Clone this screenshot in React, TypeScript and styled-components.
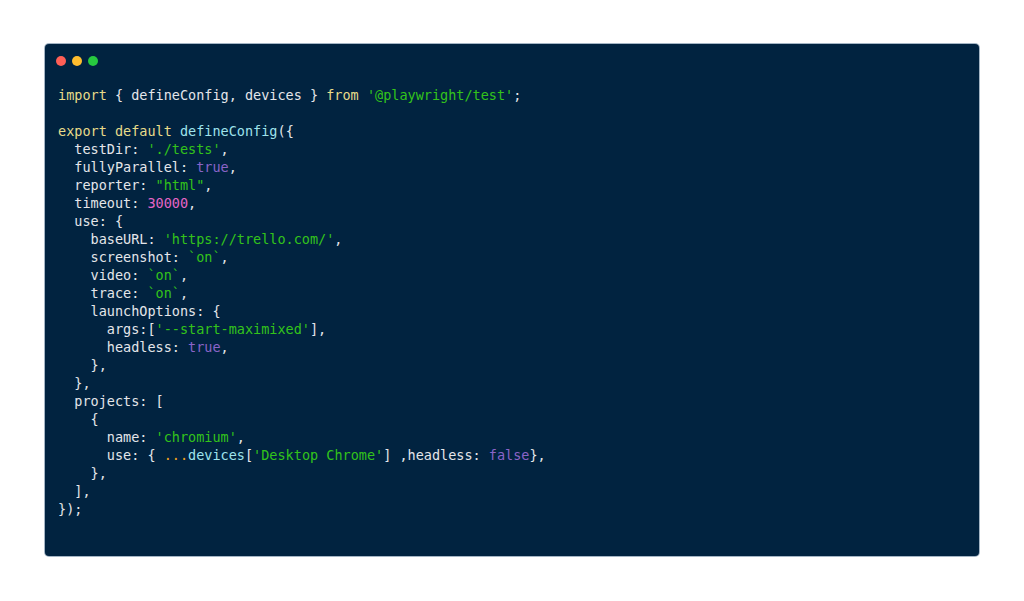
import React from "react";
import styled, { createGlobalStyle } from "styled-components";

const Global = createGlobalStyle`
  html, body { margin: 0; padding: 0; background: #ffffff; }
  body { font-family: "DejaVu Sans Mono", monospace; }
`;

const Page = styled.div`
  padding: 44px 45px 45px 45px;
`;

const Window = styled.div`
  height: 512px;
  box-sizing: border-box;
  background: #012340;
  border-radius: 4px;
  box-shadow: 0 0 0 1px rgba(90, 120, 150, 0.55);
  padding: 12px 13px 0 11px;
  display: flex;
  flex-direction: column;
`;

const Dots = styled.div`
  display: flex;
  gap: 6px;
  height: 10px;
`;

const Dot = styled.span<{ $c: string }>`
  width: 10px;
  height: 10px;
  border-radius: 50%;
  background: ${(p) => p.$c};
`;

const Code = styled.pre`
  margin: 20px 0 0 2px;
  font-family: "DejaVu Sans Mono", monospace;
  font-size: 13.5px;
  line-height: 18px;
  color: #e4e6ea;
  white-space: pre;
`;

const Line = styled.div`
  height: 18px;
`;

const colors = {
  k: "#e8dc8a",
  f: "#9fe3ec",
  s: "#33c31a",
  b: "#8a64c8",
  n: "#e565c6",
  o: "#f0a21e",
};

const T = styled.span<{ $t: keyof typeof colors }>`
  color: ${(p) => colors[p.$t]};
`;

type Seg = string | [keyof typeof colors, string];

const lines: Seg[][] = [
  [["k", "import"], " { defineConfig, devices } ", ["k", "from"], " ", ["s", "'@playwright/test'"], ";"],
  [],
  [["k", "export"], " ", ["k", "default"], " ", ["f", "defineConfig"], "({"],
  ["  testDir: ", ["s", "'./tests'"], ","],
  ["  fullyParallel: ", ["b", "true"], ","],
  ["  reporter: ", ["s", "\"html\""], ","],
  ["  timeout: ", ["n", "30000"], ","],
  ["  use: {"],
  ["    baseURL: ", ["s", "'https://trello.com/'"], ","],
  ["    screenshot: ", ["s", "`on`"], ","],
  ["    video: ", ["s", "`on`"], ","],
  ["    trace: ", ["s", "`on`"], ","],
  ["    launchOptions: {"],
  ["      args:[", ["s", "'--start-maximixed'"], "],"],
  ["      headless: ", ["b", "true"], ","],
  ["    },"],
  ["  },"],
  ["  projects: ["],
  ["    {"],
  ["      name: ", ["s", "'chromium'"], ","],
  ["      use: { ", ["o", "..."], ["f", "devices"], "[", ["s", "'Desktop Chrome'"], "] ,headless: ", ["b", "false"], "},"],
  ["    },"],
  ["  ],"],
  ["});"],
];

export default function App() {
  return (
    <>
      <Global />
      <Page>
        <Window>
          <Dots>
            <Dot $c="#ff5f56" />
            <Dot $c="#ffbd2e" />
            <Dot $c="#27c93f" />
          </Dots>
          <Code>
            {lines.map((segs, i) => (
              <Line key={i}>
                {segs.map((s, j) =>
                  typeof s === "string" ? (
                    <React.Fragment key={j}>{s}</React.Fragment>
                  ) : (
                    <T key={j} $t={s[0]}>
                      {s[1]}
                    </T>
                  )
                )}
              </Line>
            ))}
          </Code>
        </Window>
      </Page>
    </>
  );
}
